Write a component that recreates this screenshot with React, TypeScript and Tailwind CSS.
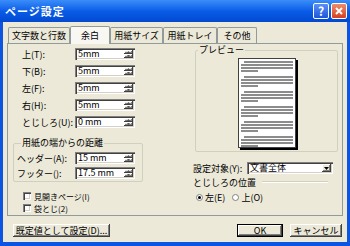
import React from 'react';

const raised =
  'bg-[#ece9d8] shadow-[inset_-1px_-1px_0_#404040,inset_1px_1px_0_#ffffff,inset_-2px_-2px_0_#808080]';
const sunken =
  'bg-white shadow-[inset_1px_1px_0_#808080,inset_2px_2px_0_#404040,inset_-1px_-1px_0_#ffffff,inset_-2px_-2px_0_#d4d0c8]';

function Spin({ value }: { value: string }) {
  return (
    <div className={`w-[60px] h-[12px] flex items-stretch p-[2px] ${sunken}`}>
      <div className="flex-1 pl-[1px] text-[9px] leading-[8px]">{value}</div>
      <div className="w-[9px] flex flex-col">
        <div className={`flex-1 flex items-center justify-center ${raised}`}>
          <svg width="3" height="2" viewBox="0 0 3 2">
            <path d="M1.5 0 L3 2 L0 2 Z" fill="#555" />
          </svg>
        </div>
        <div className={`flex-1 flex items-center justify-center ${raised}`}>
          <svg width="3" height="2" viewBox="0 0 3 2">
            <path d="M0 0 L3 0 L1.5 2 Z" fill="#555" />
          </svg>
        </div>
      </div>
    </div>
  );
}

function Row({ label, value, lw }: { label: string; value: string; lw: string }) {
  return (
    <div className="flex items-center h-[12px]">
      <div className={`${lw} whitespace-nowrap`}>{label}</div>
      <Spin value={value} />
    </div>
  );
}

const tabs = [
  { t: '文字数と行数', w: 'w-[62px]' },
  { t: '余白', w: 'w-[40px]', on: true },
  { t: '用紙サイズ', w: 'w-[53px]' },
  { t: '用紙トレイ', w: 'w-[54px]' },
  { t: 'その他', w: 'w-[40px]' },
];

function Page() {
  const groups = [0, 1, 2, 3, 4, 5];
  return (
    <div className="w-[58px] h-[90px] bg-white border border-[#404040] shadow-[2px_2px_0_#000] mx-auto mt-[2px] px-[2px] pt-[2px] overflow-hidden flex flex-col gap-[4px]">
      {groups.map((g) => (
        <div key={g} className="flex flex-col gap-[1px]">
          <div className="h-[2px] ml-[3px] bg-[#8c8c8c]" />
          <div className="h-[2px] bg-[#8c8c8c]" />
          <div className="h-[2px] bg-[#8c8c8c]" />
          <div className="h-[2px] w-[17px] bg-[#8c8c8c]" />
        </div>
      ))}
    </div>
  );
}

export default function App() {
  return (
    <div className="w-[350px] h-[246px] bg-[#0b55e2] flex flex-col overflow-hidden font-['Noto_Sans_CJK_JP','Noto_Sans',sans-serif] text-[9px] leading-none text-black">
      {/* Title bar */}
      <div className="h-[22px] flex items-center pl-[5px] pr-[3px] bg-gradient-to-b from-[#3a8df8] via-[#0a5ce8] to-[#0349d0]">
        <div className="text-white font-bold text-[11px] tracking-[1px]">ページ設定</div>
        <div className="flex-1" />
        <div className="w-[16px] h-[16px] rounded-[2px] border border-white bg-gradient-to-b from-[#5a8ff5] to-[#1e55d8] flex items-center justify-center text-white font-bold text-[12px]">
          ?
        </div>
        <div className="ml-[2px] w-[16px] h-[16px] rounded-[2px] border border-white bg-gradient-to-b from-[#f08b68] to-[#d33f1c] flex items-center justify-center">
          <svg width="8" height="8" viewBox="0 0 8 8">
            <path d="M1 1 L7 7 M7 1 L1 7" stroke="#fff" strokeWidth="2" />
          </svg>
        </div>
      </div>

      {/* Body */}
      <div className="flex-1 mx-[3px] mb-[4px] bg-[#ece9d8] flex flex-col">
        {/* Tabs */}
        <div className="mt-[3px] pl-[5px] h-[18px] flex items-end">
          {tabs.map((tab) => (
            <div
              key={tab.t}
              className={`${tab.w} flex items-center justify-center border-t border-x border-[#919b9c] rounded-t-[2px] ${
                tab.on ? 'h-[18px] bg-[#f8f7f2] -mb-px relative z-10' : 'h-[16px] bg-[#ece9d8]'
              }`}
            >
              {tab.t}
            </div>
          ))}
        </div>

        {/* Panel */}
        <div className="ml-[4px] w-[336px] h-[173px] border border-[#919b9c] bg-[#ece9d8] flex">
          {/* Left column */}
          <div className="w-[185px] pl-[5px] pt-[4px] flex flex-col">
            <div className="pl-[9px] flex flex-col gap-[5px]">
              <Row label="上(T):" value="5mm" lw="w-[53px]" />
              <Row label="下(B):" value="5mm" lw="w-[53px]" />
              <Row label="左(F):" value="5mm" lw="w-[53px]" />
              <Row label="右(H):" value="5mm" lw="w-[53px]" />
              <Row label="とじしろ(U):" value="0 mm" lw="w-[53px]" />
            </div>
            <fieldset className="mt-[9px] w-[130px] border border-[#d0d0bf] rounded-[2px] pl-[3px] pt-[3px] pb-[2px] flex flex-col gap-[3px]">
              <legend className="ml-[4px] px-[1px] leading-[12px]">用紙の端からの距離</legend>
              <Row label="ヘッダー(A):" value="15 mm" lw="w-[58px]" />
              <Row label="フッター():" value="17.5 mm" lw="w-[58px]" />
            </fieldset>
            <div className="mt-[8px] pl-[10px] flex flex-col text-[8px]">
              <div className="flex items-center h-[12px] gap-[3px] leading-[9px]">
                <div className={`w-[8px] h-[8px] ${sunken}`} />
                <span>見開きページ(I)</span>
              </div>
              <div className="flex items-center h-[12px] gap-[3px] leading-[9px]">
                <div className={`w-[8px] h-[8px] ${sunken}`} />
                <span>袋とじ(2)</span>
              </div>
            </div>
          </div>

          {/* Right column */}
          <div className="w-[145px] flex flex-col">
            <fieldset className="ml-[2px] w-[143px] h-[108px] border border-[#d0d0bf] rounded-[2px]">
              <legend className="ml-[2px] px-[1px] leading-[12px]">プレビュー</legend>
              <Page />
            </fieldset>
            <div className="mt-[10px] flex items-center h-[12px]">
              <div className="w-[54px] whitespace-nowrap">設定対象(Y):</div>
              <div className={`w-[86px] h-[12px] flex items-stretch p-[2px] ${sunken}`}>
                <div className="flex-1 pl-[1px] text-[9px] leading-[8px]">文書全体</div>
                <div className={`w-[9px] flex items-center justify-center ${raised}`}>
                  <svg width="5" height="3" viewBox="0 0 5 3">
                    <path d="M0 0 L5 0 L2.5 3 Z" fill="#000" />
                  </svg>
                </div>
              </div>
            </div>
            <div className="mt-[3px] flex items-center h-[10px] pr-[10px]">
              <span>とじしろの位置</span>
              <div className="flex-1 ml-[6px] border-t border-[#d0d0bf] border-b-white border-b" />
            </div>
            <div className="mt-[5px] pl-[3px] flex items-center h-[10px]">
              <div className="w-[7px] h-[7px] rounded-full bg-white border border-[#7f7f7f] flex items-center justify-center">
                <div className="w-[3px] h-[3px] rounded-full bg-black" />
              </div>
              <span className="ml-[2px]">左(E)</span>
              <div className="ml-[7px] w-[7px] h-[7px] rounded-full bg-white border border-[#7f7f7f]" />
              <span className="ml-[2px]">上(O)</span>
            </div>
          </div>
        </div>

        {/* Buttons */}
        <div className="mt-[8px] flex items-center">
          <div className={`ml-[10px] w-[97px] h-[13px] flex items-center justify-center ${raised}`}>
            既定値として設定(D)...
          </div>
          <div className="flex-1" />
          <div className="w-[46px] h-[13px] border border-black flex">
            <div className={`flex-1 flex items-center justify-center ${raised}`}>OK</div>
          </div>
          <div className={`ml-[7px] mr-[5px] w-[52px] h-[13px] flex items-center justify-center ${raised}`}>
            キャンセル
          </div>
        </div>
      </div>
    </div>
  );
}
